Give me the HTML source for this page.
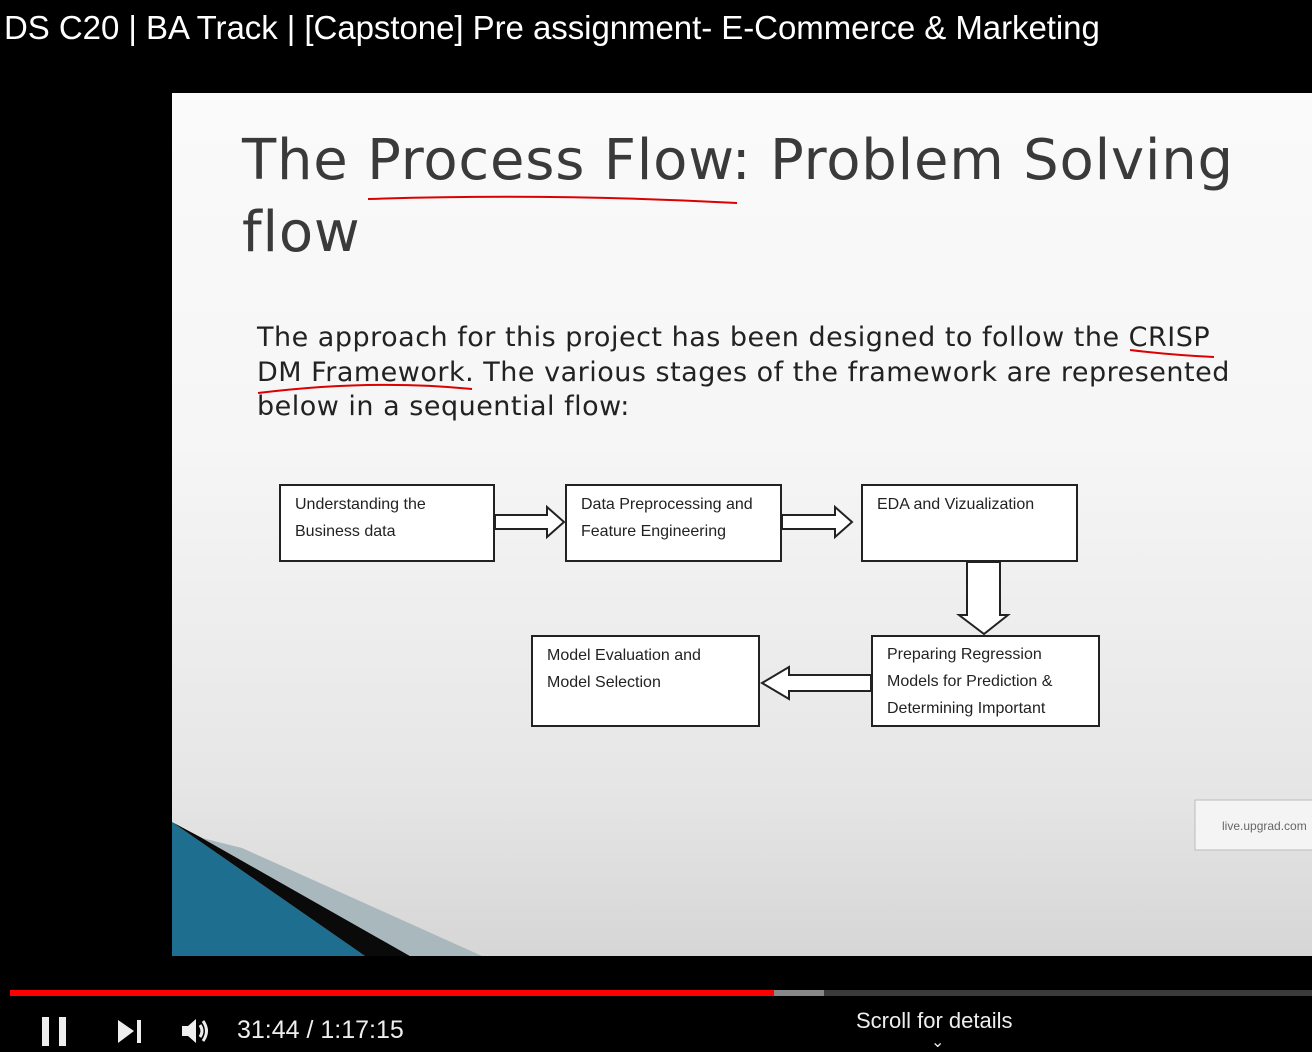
<!DOCTYPE html>
<html><head><meta charset="utf-8"><style>
body{margin:0;width:1312px;height:1052px;background:#000;position:relative;overflow:hidden;font-family:"Liberation Sans",sans-serif}
.t{position:absolute;left:4px;top:9px;color:#fff;font-size:33px;white-space:nowrap;letter-spacing:-0.05px}
.slide{position:absolute;left:172px;top:93px;width:1140px;height:863px;background:linear-gradient(#fafafa 0%,#f6f6f6 40%,#e6e6e6 80%,#d6d6d6 100%);overflow:hidden}
.h{position:absolute;left:70px;top:32px;font-size:56px;color:#3a3a3a;line-height:72px;font-family:"DejaVu Sans","Liberation Sans",sans-serif;letter-spacing:0.8px;white-space:nowrap}
.p{position:absolute;left:85px;top:228px;font-size:27px;line-height:34.5px;color:#222;font-family:"DejaVu Sans","Liberation Sans",sans-serif;letter-spacing:0.5px;white-space:nowrap}
.b{position:absolute;border:2px solid #222;background:#fff;font-size:16px;line-height:27px;padding:5px 14px;box-sizing:border-box;color:#222}
.ctl{position:absolute;color:#eee}
</style></head><body>
<div class="t">DS C20 | BA Track | [Capstone] Pre assignment- E-Commerce &amp; Marketing</div>
<div class="slide">
<div class="h">The Process Flow: Problem Solving<br>flow</div>
<div class="p">The approach for this project has been designed to follow the CRISP<br>DM Framework. The various stages of the framework are represented<br>below in a sequential flow:</div>
<div class="b" style="left:107px;top:391px;width:216px;height:78px">Understanding the<br>Business data</div>
<div class="b" style="left:393px;top:391px;width:217px;height:78px">Data Preprocessing and<br>Feature Engineering</div>
<div class="b" style="left:689px;top:391px;width:217px;height:78px">EDA and Vizualization</div>
<div class="b" style="left:699px;top:542px;width:229px;height:92px;line-height:27px;padding-top:4px">Preparing Regression<br>Models for Prediction &amp;<br>Determining Important</div>
<div class="b" style="left:359px;top:542px;width:229px;height:92px">Model Evaluation and<br>Model Selection</div>
<svg width="1140" height="863" style="position:absolute;left:0;top:0">
<g fill="#fff" stroke="#222" stroke-width="2">
<path d="M323 422H375V414L392 429L375 444V436H323Z"/>
<path d="M610 422H663V414L680 429L663 444V436H610Z"/>
<path d="M795 469V522H787L812 541L836 522H828V469Z"/>
<path d="M699 582H617V574L590 590L617 606V598H699Z"/>
</g>
<g fill="none" stroke="#d00" stroke-width="2">
<path d="M196 106Q380 100 565 110"/>
<path d="M958 257Q1000 262 1042 264"/>
<path d="M86 300Q200 286 300 296"/>
</g>
<polygon points="0,729 193,863 0,863" fill="#1e6f8f"/>
<polygon points="0,729 30,745 238,863 193,863" fill="#0a0a0a"/>
<polygon points="30,745 70,755 310,863 238,863" fill="#a9b8bd"/>
<rect x="1023" y="707" width="130" height="50" fill="#f4f4f4" stroke="#bbb"/>
<text x="1050" y="737" font-size="12" fill="#666" font-family="Liberation Sans">live.upgrad.com</text>
</svg>
</div>
<div style="position:absolute;left:10px;top:990px;width:1302px;height:6px;background:#3a3a3a"></div>
<div style="position:absolute;left:10px;top:990px;width:814px;height:6px;background:#888"></div>
<div style="position:absolute;left:10px;top:990px;width:764px;height:6px;background:#f00"></div>
<div style="position:absolute;left:42px;top:1017px;width:7px;height:29px;background:#eee"></div>
<div style="position:absolute;left:59px;top:1017px;width:7px;height:29px;background:#eee"></div>
<svg style="position:absolute;left:118px;top:1019px" width="26" height="26"><path d="M0 1L16 12L0 24Z" fill="#eee"/><rect x="19" y="1" width="4" height="23" fill="#eee"/></svg>
<svg style="position:absolute;left:180px;top:1016px" width="34" height="30"><path d="M2 10H8L16 3V27L8 20H2Z" fill="#eee"/><path d="M20 9Q24 15 20 21M23 5Q30 15 23 25" stroke="#eee" stroke-width="3" fill="none"/></svg>
<div class="ctl" style="left:237px;top:1016px;font-size:25px">31:44 / 1:17:15</div>
<div class="ctl" style="left:856px;top:1008px;font-size:22px">Scroll for details</div>
<div class="ctl" style="left:931px;top:1032px;font-size:16px">⌄</div>
</body></html>
